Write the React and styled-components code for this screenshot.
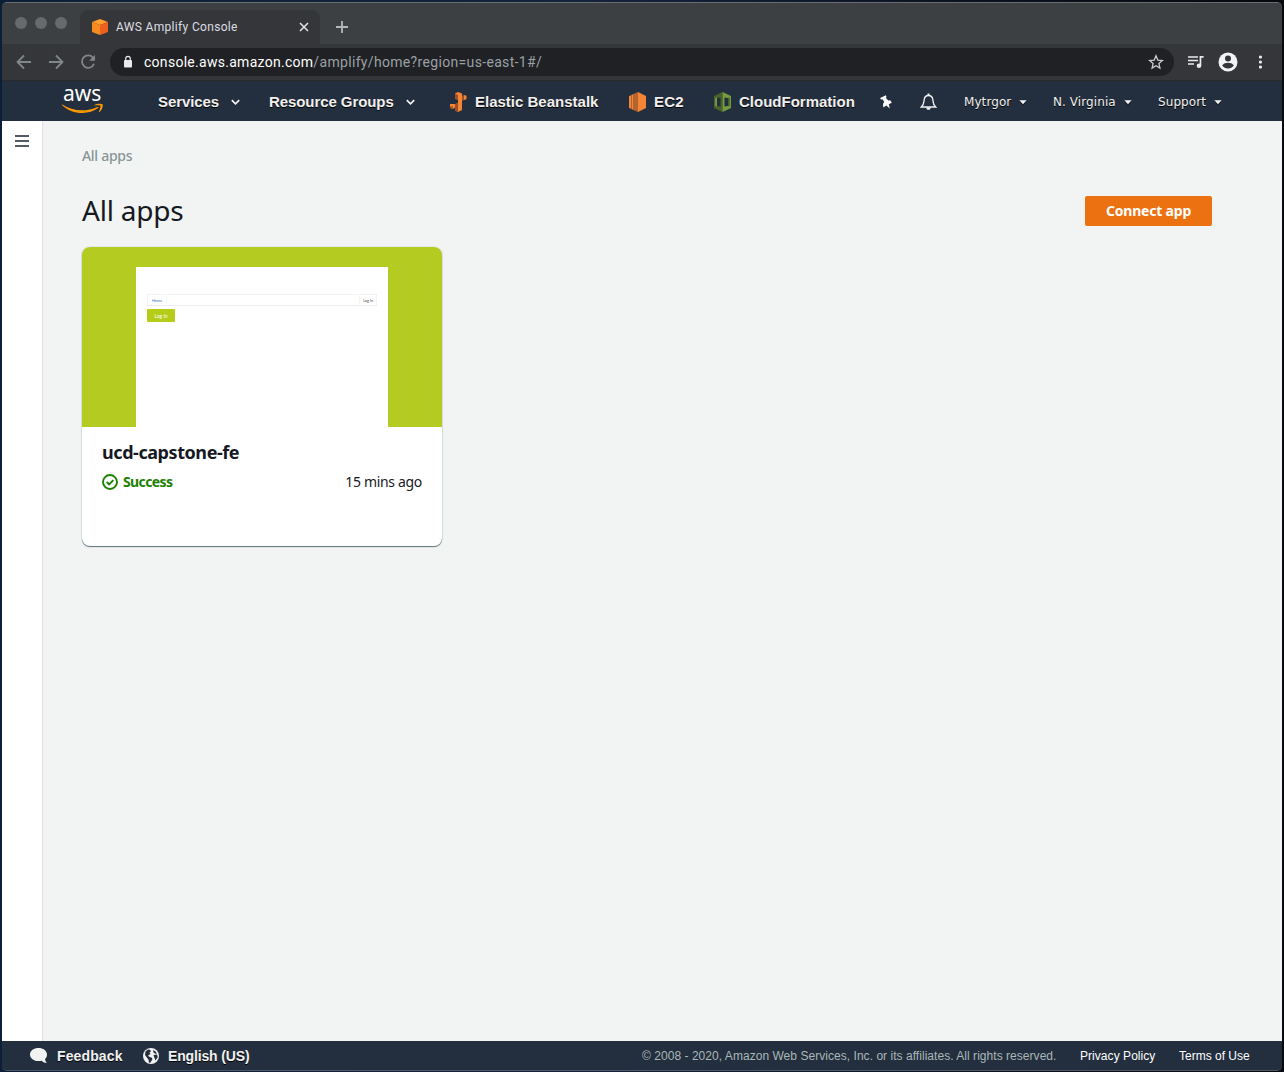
import React from 'react';
import styled, { createGlobalStyle } from 'styled-components';

const GlobalStyle = createGlobalStyle`
  * { box-sizing: border-box; }
  body { margin: 0; background: #0b1422; }
  svg { display: block; flex: none; }
`;

const ember = '"Noto Sans", "Open Sans", sans-serif';
const helvetica = '"Liberation Sans", Arial, sans-serif';

const Desktop = styled.div`
  width: 1284px;
  height: 1072px;
  padding: 2px 2px 1px 2px;
  overflow: hidden;
  background: linear-gradient(90deg, #0d1f38 0, #14233d 45%, #0b1220 75%, #07090d 100%);
`;

const Window = styled.div`
  display: flex;
  flex-direction: column;
  width: 1280px;
  height: 1069px;
  overflow: hidden;
  border-radius: 5px;
  background: #232f3e;
  border-top: 1px solid #6a6e70;
  border-bottom: 1px solid #4c5763;
`;

const TabStrip = styled.div`
  display: flex;
  align-items: flex-end;
  height: 41px;
  flex: none;
  background: #3c4043;
`;

const Lights = styled.div`
  display: flex;
  gap: 8px;
  width: 78px;
  height: 41px;
  padding: 14px 0 0 13px;
`;

const Light = styled.span`
  width: 12px;
  height: 12px;
  border-radius: 50%;
  background: #68696c;
`;

const Tab = styled.div`
  display: flex;
  align-items: center;
  width: 240px;
  height: 34px;
  padding: 0 10px 0 12px;
  border-radius: 8px 8px 0 0;
  background: #35363a;
`;

const TabTitle = styled.span`
  flex: 1;
  margin-left: 8px;
  font: 12px/16px Roboto, ${helvetica};
  letter-spacing: 0.33px;
  color: #dcdee1;
  white-space: nowrap;
`;

const NewTab = styled.div`
  padding: 0 0 10px 15px;
`;

const Toolbar = styled.div`
  display: flex;
  align-items: center;
  height: 37px;
  flex: none;
  padding: 0 14px 0 13px;
  background: #35363a;
  border-bottom: 1px solid #292a2c;
`;

const NavButtons = styled.div`
  display: flex;
  gap: 14px;
  width: 95px;
`;

const AddressBar = styled.div`
  display: flex;
  align-items: center;
  width: 1064px;
  height: 28px;
  padding: 0 10px 0 12px;
  border-radius: 14px;
  background: #202124;
`;

const Url = styled.div`
  flex: 1;
  margin-left: 10px;
  font: 14px/20px Roboto, ${helvetica};
  letter-spacing: 0.33px;
  color: #9aa0a6;
  white-space: nowrap;
`;

const Host = styled.span`
  letter-spacing: 0.28px;
  color: #ffffff;
`;

const ToolbarActions = styled.div`
  display: flex;
  align-items: center;
  margin-left: 13px;
`;

const ConsoleNav = styled.nav`
  display: flex;
  align-items: center;
  height: 40px;
  flex: none;
  padding: 2px 0 0 60px;
  background: #232f3e;
`;

const Logo = styled.div`
  display: flex;
  flex-direction: column;
  width: 96px;
  height: 38px;
`;

const LogoText = styled.span`
  height: 20px;
  padding-left: 1px;
  font: 400 21px/20px ${ember};
  letter-spacing: 0;
  color: #ffffff;
`;

const NavItem = styled.div`
  display: flex;
  align-items: center;
  width: ${(p) => p.$width}px;
  flex: none;
  color: #f2f2f2;
`;

const NavLabel = styled.span`
  width: ${(p) => p.$width}px;
  flex: none;
  font: bold 15px/20px ${helvetica};
  letter-spacing: ${(p) => p.$spacing || 0}px;
  color: #f2f0ee;
  text-shadow: 0 1px 0 #000000;
  white-space: nowrap;
`;

const UserLabel = styled(NavLabel)`
  font: 12px/20px "DejaVu Sans", sans-serif;
  letter-spacing: 0.08px;
`;

const Body = styled.div`
  display: flex;
  flex: 1;
  background: #f2f3f3;
`;

const Sidebar = styled.aside`
  width: 41px;
  padding: 14px 0 0 13px;
  background: #ffffff;
  border-right: 1px solid #dfe2e3;
`;

const Main = styled.main`
  flex: 1;
  padding: 25px 70px 0 39px;
  background: #f1f4f3;
  font-family: ${ember};
`;

const Breadcrumb = styled.div`
  height: 20px;
  font-size: 14px;
  font-weight: 500;
  line-height: 20px;
  letter-spacing: -0.3px;
  color: #879596;
`;

const Header = styled.header`
  display: flex;
  justify-content: space-between;
  align-items: center;
  height: 30px;
  margin: 30px 0 21px;
`;

const Title = styled.h1`
  margin: -2px 0 0;
  font-size: 28px;
  font-weight: 400;
  line-height: 36px;
  letter-spacing: -0.2px;
  color: #16191f;
`;

const PrimaryButton = styled.button`
  width: 127px;
  height: 30px;
  padding: 0;
  border: 0;
  border-radius: 2px;
  background: #ec7211;
  color: #ffffff;
  font: bold 14px/20px ${ember};
  letter-spacing: -0.2px;
`;

const Card = styled.article`
  width: 360px;
  height: 299px;
  overflow: hidden;
  border-radius: 8px;
  background: #ffffff;
  box-shadow: 0 1px 1px #5f7178, 0 0 1px 1px #e3e8e8;
`;

const Preview = styled.div`
  height: 180px;
  padding: 20px 54px 0;
  background: #b4cb22;
`;

const MiniPage = styled.div`
  height: 160px;
  padding: 27px 11px 0;
  background: #ffffff;
`;

const MiniMenu = styled.div`
  display: flex;
  justify-content: space-between;
  height: 12px;
  border: 1px solid #f3f3f4;
  border-bottom-color: #ededee;
`;

const MiniItem = styled.span`
  padding: 0 ${(p) => (p.$end ? 3 : 4)}px;
  font: 4px/11px Lato, sans-serif;
  letter-spacing: -0.12px;
  color: ${(p) => (p.$end ? '#555555' : '#4183c4')};
  border-right: ${(p) => (p.$end ? 0 : 1)}px solid #f6f6f6;
  border-left: ${(p) => (p.$end ? 1 : 0)}px solid #f6f6f6;
`;

const MiniButton = styled.div`
  width: 28px;
  height: 13px;
  margin-top: 3px;
  border-radius: 1px;
  background: #b5cc18;
  color: #ffffff;
  font: 5px/14px Lato, sans-serif;
  text-align: center;
`;

const CardBody = styled.div`
  padding: 14px 20px;
  color: #16191f;
`;

const AppName = styled.h2`
  margin: 0;
  font-size: 18px;
  font-weight: 700;
  line-height: 22px;
  letter-spacing: -0.43px;
`;

const StatusRow = styled.div`
  display: flex;
  align-items: center;
  justify-content: space-between;
  height: 20px;
  margin-top: 9px;
  font-size: 14px;
  line-height: 20px;
`;

const Status = styled.span`
  display: flex;
  align-items: center;
  gap: 5px;
  font-weight: 700;
  letter-spacing: -0.6px;
  color: #1d8102;
`;

const Age = styled.span`
  letter-spacing: -0.33px;
`;

const Footer = styled.footer`
  display: flex;
  align-items: center;
  height: 29px;
  flex: none;
  padding: 0 32px 0 28px;
  background: #232f3e;
`;

const FooterAction = styled.span`
  display: flex;
  align-items: center;
  gap: 9px;
  width: ${(p) => p.$width}px;
  font: bold 14px/20px ${helvetica};
  letter-spacing: ${(p) => p.$spacing}px;
  color: #f2f2f2;
  text-shadow: 0 1px 0 #000000;
  white-space: nowrap;
`;

const Legal = styled.div`
  display: flex;
  margin-left: auto;
  font: 12px/20px ${helvetica};
  white-space: nowrap;
`;

const LegalText = styled.span`
  width: ${(p) => p.$width}px;
  letter-spacing: ${(p) => p.$spacing || 0}px;
  color: ${(p) => (p.$link ? '#ffffff' : '#aab7b8')};
`;

const Cube = () => (
  <svg width="16" height="16" viewBox="0 0 16 16">
    <path d="M0 3 8 0l8 3-8 3z" fill="#ff9d2d" />
    <path d="M0 3l8 3v10l-8-3z" fill="#f68b1f" />
    <path d="M16 3 8 6v10l8-3z" fill="#ed6120" />
  </svg>
);

const Cross = () => (
  <svg width="12" height="12" viewBox="0 0 12 12" stroke="#dfe1e5" strokeWidth="1.6">
    <path d="M2 2l8 8M10 2l-8 8" />
  </svg>
);

const Plus = () => (
  <svg width="14" height="14" viewBox="0 0 14 14" stroke="#b4b7ba" strokeWidth="1.8">
    <path d="M7 1v12M1 7h12" />
  </svg>
);

const Arrow = ({ forward }) => (
  <svg width="18" height="18" viewBox="0 0 18 18" fill="none" stroke="#838689" strokeWidth="1.8">
    {forward ? <path d="M2 9h13M9 2.5 15.5 9 9 15.5" /> : <path d="M16 9H3M9 2.5 2.5 9 9 15.5" />}
  </svg>
);

const Reload = () => (
  <svg width="18" height="18" viewBox="0 0 18 18" fill="none" stroke="#838689" strokeWidth="1.8">
    <path d="M14.2 5A6.2 6.2 0 1 0 15 10.8" />
    <path d="M16 2v5.8h-5.8z" fill="#838689" stroke="none" />
  </svg>
);

const Lock = () => (
  <svg width="12" height="14" viewBox="0 0 12 14">
    <rect x="2" y="5" width="8" height="7.5" rx="1" fill="#e8eaed" />
    <path d="M3.7 5.5V3.6a2.3 2.3 0 0 1 4.6 0v1.9" fill="none" stroke="#e8eaed" strokeWidth="1.2" />
  </svg>
);

const Star = () => (
  <svg width="16" height="16" viewBox="0 0 16 16" fill="none" stroke="#c8cacd" strokeWidth="1.3">
    <path d="M8 1.8l1.8 4.3 4.6.4-3.5 3 1 4.6L8 11.7l-3.9 2.4 1-4.6-3.5-3 4.6-.4z" />
  </svg>
);

const MediaIcon = () => (
  <svg width="18" height="16" viewBox="0 0 18 16">
    <path d="M1 3h10M1 6.5h10M1 10h6" stroke="#e8eaed" strokeWidth="1.6" />
    <path d="M12.6 2h4v1.7h-2.3v8h-1.7z" fill="#e8eaed" />
    <circle cx="12" cy="11.7" r="2.3" fill="#e8eaed" />
  </svg>
);

const Profile = () => (
  <svg width="20" height="20" viewBox="0 0 20 20">
    <circle cx="10" cy="10" r="9.5" fill="#f1f3f4" />
    <circle cx="10" cy="6.5" r="3" fill="#35363a" />
    <path d="M4.2 13.5c1-2 3.8-2.7 5.8-2.7s4.8.7 5.8 2.7c-1.3 2-3.5 3-5.8 3s-4.5-1-5.8-3z" fill="#35363a" />
  </svg>
);

const Dots = () => (
  <svg width="4" height="16" viewBox="0 0 4 16" fill="#e8eaed">
    <circle cx="1.5" cy="3" r="1.6" />
    <circle cx="1.5" cy="8" r="1.6" />
    <circle cx="1.5" cy="13" r="1.6" />
  </svg>
);

const Smile = () => (
  <svg width="42" height="11" viewBox="0 0 42 11">
    <path d="M.3 1.5C6 5 12.5 7.3 20 7.3c5 0 10.5-1.200 15.500-3.400.8-.3 1.500.6.7 1.200C32 8.300 26 10 20.500 10 12.500 10 5.500 7.200.1 2.200c-.4-.4-.1-.9.2-.7z" fill="#ff9900" />
    <path d="M32.500 2c2.200-1.500 7-1.700 8-.7.8 1-.2 5.700-3 7.700-.4.3-.8.1-.6-.4.700-1.600 2-5 1.400-5.800-.6-.7-3.800-.4-5.400-.2-.5 0-.6-.3-.4-.6z" fill="#ff9900" />
  </svg>
);

const Chevron = () => (
  <svg width="9" height="7" viewBox="0 0 9 7" fill="none" stroke="#f2f2f2" strokeWidth="1.7">
    <path d="M.8 1.200l3.700 3.600 3.700-3.600" />
  </svg>
);

const Caret = () => (
  <svg width="8" height="5" viewBox="0 0 8 5">
    <path d="M.5 1.300h7L4 5z" fill="#000" />
    <path d="M.3.300h7.400L4 4.200z" fill="#f2f2f2" />
  </svg>
);

const Beanstalk = () => (
  <svg width="17" height="20" viewBox="0 0 17 20">
    <path d="M5 1.500 8 0l4 1.500V18l-4 2-3-1.500v-6L8 11V8L5 6.500z" fill="#f58536" />
    <path d="M5 1.500 8 3v5L5 6.500zM5 12l3-1v9l-3-1.500z" fill="#9d5025" />
    <path d="M0 12h5v3.500L3 17l-3-1z" fill="#f58536" />
    <path d="M0 14.500h3V17l-3-1z" fill="#9d5025" />
    <path d="M12 3.500l2-.5v5l-2 1z" fill="#9d5025" />
    <path d="M14 3l2.500.8v3.500L14 8z" fill="#f58536" />
  </svg>
);

const Ec2 = () => (
  <svg width="17" height="20" viewBox="0 0 17 20">
    <path d="M9 0l8 4v12l-8 4z" fill="#f58536" />
    <path d="M9 0v20l-2.500-1V1zM5.500 1.500v17L4 18V2zM3 2.500v15L2 17V3z" fill="#b5622d" />
    <path d="M6.500 1.200v17.600l-1-.5V1.700zM4 2.200v15.600l-1-.5V2.700zM2 3.200v13.600l-2-1V4.200z" fill="#f58536" />
  </svg>
);

const Cloud = () => (
  <svg width="17" height="20" viewBox="0 0 17 20">
    <path d="M8.500 0v20L0 16V4z" fill="#4b612c" />
    <path d="M8.500 0v20l8.500-4V4z" fill="#759c3e" />
    <path d="M3 6 6.500 5.500v9L3 14z" fill="#232f3e" />
    <path d="M10.500 5.500l3.500.5v8l-3.500.5z" fill="#232f3e" />
    <path d="M1.200 6 3 5.500v9L1.200 14z" fill="#759c3e" />
    <path d="M14 5.500l1.800.5v8l-1.800.5z" fill="#4b612c" />
  </svg>
);

const Pin = () => (
  <svg width="14" height="14" viewBox="0 0 14 14">
    <path d="M1.200 3 6.800.2l.7 1.500-.7 1 2.400 2.800 2-.3 1.600 2.600-3 1.500 1 4.200-3.500-3-3 2-.3-3.800 1.300-1.700-1.800-2.800-1.600.2z" fill="#ffffff" />
  </svg>
);

const Bell = () => (
  <svg width="17" height="18" viewBox="0 0 17 18">
    <path d="M1.300 14c2.700-2 2.500-4.500 2.800-7C4.400 4.300 6 2.500 8.500 2.500s4.100 1.800 4.400 4.500c.3 2.500.1 5 2.800 7z" fill="none" stroke="#f2f2f2" strokeWidth="1.3" />
    <path d="M7.500.5h2V3h-2zM6.200 14.500h4.600c-.2 1.500-1 2.300-2.300 2.300s-2.100-.8-2.300-2.300z" fill="#f2f2f2" />
  </svg>
);

const Burger = () => (
  <svg width="14" height="12" viewBox="0 0 14 12" fill="#545b64">
    <path d="M0 0h14v2H0zM0 5h14v2H0zM0 10h14v2H0z" />
  </svg>
);

const Check = () => (
  <svg width="16" height="16" viewBox="0 0 16 16" fill="none" stroke="#1d8102" strokeWidth="1.9">
    <circle cx="8" cy="8" r="7" />
    <path d="M4.700 8l2.400 2.300 4.200-4.200" />
  </svg>
);

const Bubble = () => (
  <svg width="18" height="17" viewBox="0 0 18 17">
    <path d="M8.500 1C13 1 17 3.700 17 7.500c0 2-.8 3.500-2 4.600.1 1.500.8 2.700 1.800 3.900-2 0-3.800-.8-5-2.200-1 .2-2 .3-3.300.3C4 14.100 0 11.500 0 7.500S4 1 8.500 1z" fill="#f2f2f2" />
  </svg>
);

const Globe = () => (
  <svg width="16" height="16" viewBox="0 0 16 16">
    <circle cx="8" cy="8" r="8" fill="#f2f2f2" />
    <path d="M2.500 3.500 5 1.500l2 .2 1 1.500-1.500 1.300 1 1.500L5 7.500 6.500 9l2 .5 1 1.500-2 3.500-1.500.2-.5-3L3.500 9 2 7zM10 2l2.500 1.500 1.500 2.500-2-.5-1.500-1zM10.500 7l3.500-.5.8 2.500-2.300 3.500-1-2.500z" fill="#232f3e" />
  </svg>
);

export default function App() {
  return (
    <Desktop>
      <GlobalStyle />
      <Window>
        <TabStrip>
          <Lights><Light /><Light /><Light /></Lights>
          <Tab>
            <Cube />
            <TabTitle>AWS Amplify Console</TabTitle>
            <Cross />
          </Tab>
          <NewTab><Plus /></NewTab>
        </TabStrip>
        <Toolbar>
          <NavButtons><Arrow /><Arrow forward /><Reload /></NavButtons>
          <AddressBar>
            <Lock />
            <Url><Host>console.aws.amazon.com</Host>/amplify/home?region=us-east-1#/</Url>
            <Star />
          </AddressBar>
          <ToolbarActions>
            <NavItem $width={31}><MediaIcon /></NavItem>
            <NavItem $width={41}><Profile /></NavItem>
            <Dots />
          </ToolbarActions>
        </Toolbar>
        <ConsoleNav>
          <Logo><LogoText>aws</LogoText><Smile /></Logo>
          <NavItem $width={111}><NavLabel $width={73} $spacing={-0.1}>Services</NavLabel><Chevron /></NavItem>
          <NavItem $width={181}><NavLabel $width={137} $spacing={-0.08}>Resource Groups</NavLabel><Chevron /></NavItem>
          <NavItem $width={179}><NavItem $width={25}><Beanstalk /></NavItem><NavLabel $width={130}>Elastic Beanstalk</NavLabel></NavItem>
          <NavItem $width={85}><NavItem $width={25}><Ec2 /></NavItem><NavLabel $width={40} $spacing={0.2}>EC2</NavLabel></NavItem>
          <NavItem $width={165}><NavItem $width={25}><Cloud /></NavItem><NavLabel $width={125}>CloudFormation</NavLabel></NavItem>
          <NavItem $width={41}><Pin /></NavItem>
          <NavItem $width={44}><Bell /></NavItem>
          <NavItem $width={89}><UserLabel $width={55}>Mytrgor</UserLabel><Caret /></NavItem>
          <NavItem $width={105}><UserLabel $width={71}>N. Virginia</UserLabel><Caret /></NavItem>
          <NavItem $width={70}><UserLabel $width={56}>Support</UserLabel><Caret /></NavItem>
        </ConsoleNav>
        <Body>
          <Sidebar><Burger /></Sidebar>
          <Main>
            <Breadcrumb>All apps</Breadcrumb>
            <Header>
              <Title>All apps</Title>
              <PrimaryButton>Connect app</PrimaryButton>
            </Header>
            <Card>
              <Preview>
                <MiniPage>
                  <MiniMenu><MiniItem>Home</MiniItem><MiniItem $end>Log In</MiniItem></MiniMenu>
                  <MiniButton>Log In</MiniButton>
                </MiniPage>
              </Preview>
              <CardBody>
                <AppName>ucd-capstone-fe</AppName>
                <StatusRow>
                  <Status><Check />Success</Status>
                  <Age>15 mins ago</Age>
                </StatusRow>
              </CardBody>
            </Card>
          </Main>
        </Body>
        <Footer>
          <FooterAction $width={113} $spacing={0.12}><Bubble />Feedback</FooterAction>
          <FooterAction $width={120} $spacing={-0.15}><Globe />English (US)</FooterAction>
          <Legal>
            <LegalText $width={438} $spacing={0.04}>© 2008 - 2020, Amazon Web Services, Inc. or its affiliates. All rights reserved.</LegalText>
            <LegalText $link $width={99} $spacing={0.05}>Privacy Policy</LegalText>
            <LegalText $link $width={71}>Terms of Use</LegalText>
          </Legal>
        </Footer>
      </Window>
    </Desktop>
  );
}
